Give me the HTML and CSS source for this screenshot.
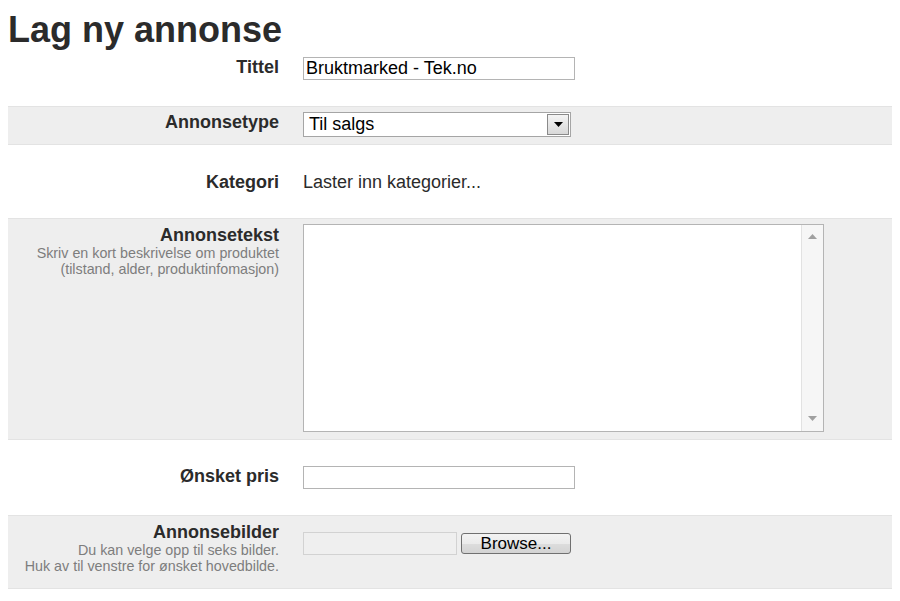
FILE: index.html
```html
<!DOCTYPE html>
<html lang="no">
<head>
<meta charset="utf-8">
<title>Lag ny annonse</title>
<link rel="stylesheet" href="styles.css">
</head>
<body>
<h1 class="page-title">Lag ny annonse</h1>
<form class="ad-form">
  <div class="row row-title">
    <div class="label"><span class="label-main">Tittel</span></div>
    <div class="field"><input class="text-input" type="text" value="Bruktmarked - Tek.no"></div>
  </div>
  <div class="row row-type alt">
    <div class="label"><span class="label-main">Annonsetype</span></div>
    <div class="field">
      <div class="select-box">
        <span class="select-value">Til salgs</span>
        <span class="select-btn"><svg width="9" height="5" viewBox="0 0 9 5"><path d="M0 0H9L4.5 5Z" fill="#000"/></svg></span>
      </div>
    </div>
  </div>
  <div class="row row-cat">
    <div class="label"><span class="label-main">Kategori</span></div>
    <div class="field"><span class="loading">Laster inn kategorier...</span></div>
  </div>
  <div class="row row-text alt">
    <div class="label">
      <span class="label-main">Annonsetekst</span>
      <span class="hint">Skriv en kort beskrivelse om produktet<br>(tilstand, alder, produktinfomasjon)</span>
    </div>
    <div class="field">
      <div class="textarea-box">
        <textarea class="textarea"></textarea>
        <div class="scrollbar">
          <svg width="9" height="5" viewBox="0 0 9 5"><path d="M0 5H9L4.5 0Z" fill="#a0a0a0"/></svg>
          <svg width="9" height="5" viewBox="0 0 9 5"><path d="M0 0H9L4.5 5Z" fill="#a0a0a0"/></svg>
        </div>
      </div>
    </div>
  </div>
  <div class="row row-price">
    <div class="label"><span class="label-main">Ønsket pris</span></div>
    <div class="field"><input class="text-input" type="text" value=""></div>
  </div>
  <div class="row row-img alt">
    <div class="label">
      <span class="label-main">Annonsebilder</span>
      <span class="hint">Du kan velge opp til seks bilder.<br>Huk av til venstre for ønsket hovedbilde.</span>
    </div>
    <div class="field file-field">
      <span class="file-box"></span>
      <span class="browse-btn">Browse...</span>
    </div>
  </div>
</form>
</body>
</html>
```

FILE: styles.css
```css
body {
  margin: 8px;
  font-family: "Liberation Sans", Arial, sans-serif;
  color: #333;
  background: #fff;
}

.page-title {
  margin: 0;
  font-size: 36px;
  line-height: 44px;
  font-weight: bold;
  color: #2b2b2b;
}

.ad-form {
  margin: 0;
  width: 885px;
}

.row {
  display: grid;
  grid-template-columns: 271px 1fr;
  column-gap: 24px;
  border-bottom: 1px solid #e3e3e3;
}

.row.alt {
  background: #eeeeee;
}

.row-title { padding: 5px 0 26px; }
.row-type { padding: 5px 0 7px; }
.row-cat { padding: 27px 0 26px; }
.row-text { padding: 5px 0 7px; }
.row-price { padding: 26px 0 26px; }
.row-img { padding: 6px 0 14px; }

.label {
  display: flex;
  flex-direction: column;
  align-items: flex-end;
  text-align: right;
}

.label-main {
  font-size: 18px;
  line-height: 20px;
  font-weight: bold;
  color: #2b2b2b;
}

.row-text .label-main { margin-top: 1px; }

.hint {
  font-size: 14.3px;
  line-height: 16px;
  color: #7d7d7d;
}

.field {
  display: flex;
  align-items: flex-start;
}

.text-input {
  box-sizing: border-box;
  width: 272px;
  height: 23px;
  margin: 0;
  padding: 0 2px;
  border: 1px solid #b4b4b4;
  font-family: "Liberation Sans", Arial, sans-serif;
  font-size: 18px;
  color: #000;
  background: #fff;
  outline: none;
}

.select-box {
  box-sizing: border-box;
  width: 268px;
  height: 25px;
  border: 1px solid #a5a5a5;
  background: #fff;
  display: flex;
  align-items: center;
  justify-content: space-between;
  padding: 0 1px 0 5px;
}

.select-value {
  font-size: 18px;
  color: #000;
}

.select-btn {
  box-sizing: border-box;
  width: 22px;
  height: 21px;
  border: 1px solid #8a8a8a;
  background: linear-gradient(#f4f4f4, #d8d8d8);
  display: flex;
  align-items: center;
  justify-content: center;
}

.loading {
  font-size: 18px;
  line-height: 20px;
  color: #2b2b2b;
}

.textarea-box {
  box-sizing: border-box;
  width: 521px;
  height: 208px;
  border: 1px solid #b4b4b4;
  background: #fff;
  display: flex;
}

.textarea {
  flex: 1;
  border: none;
  margin: 0;
  padding: 2px;
  resize: none;
  outline: none;
  overflow: hidden;
  font-family: "Liberation Sans", Arial, sans-serif;
  font-size: 16px;
}

.scrollbar {
  width: 21px;
  border-left: 1px solid #e2e2e2;
  background: #f6f6f6;
  display: flex;
  flex-direction: column;
  align-items: center;
  justify-content: space-between;
  padding: 9px 0 10px;
}

.file-field {
  padding-top: 10px;
  gap: 4px;
}

.file-box {
  box-sizing: border-box;
  width: 154px;
  height: 23px;
  border: 1px solid #d2d2d2;
  background: #efefef;
}

.browse-btn {
  box-sizing: border-box;
  width: 110px;
  height: 21px;
  margin-top: 1px;
  border: 1px solid #707070;
  border-radius: 3px;
  background: linear-gradient(#f3f3f3 0%, #ebebeb 50%, #dddddd 51%, #d3d3d3 100%);
  font-size: 17px;
  line-height: 19px;
  color: #000;
  text-align: center;
}
```
